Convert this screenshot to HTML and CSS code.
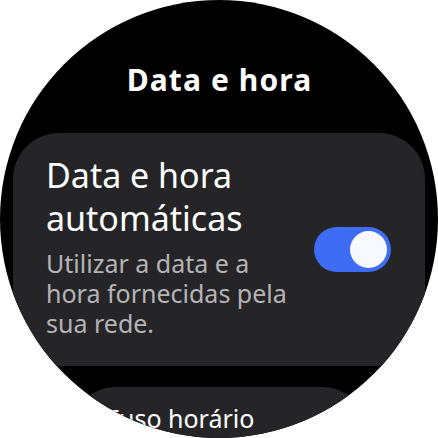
FILE: index.html
```html
<!DOCTYPE html>
<html lang="pt">
<head>
<meta charset="utf-8">
<title>Data e hora</title>
<link rel="stylesheet" href="styles.css">
</head>
<body>
<div class="screen">
  <h1 class="heading">Data e hora</h1>
  <div class="card card-main">
    <div class="card-text">
      <div class="card-title">Data e hora automáticas</div>
      <div class="card-sub">Utilizar a data e a hora fornecidas pela sua rede.</div>
    </div>
    <div class="toggle"><div class="knob"></div></div>
  </div>
  <div class="card card-next">
    <div class="card-title small">Fuso horário</div>
  </div>
</div>
</body>
</html>
```
FILE: styles.css
```css
html, body {
  margin: 0;
  padding: 0;
  background: #ffffff;
}
body {
  font-family: "Noto Sans", "Open Sans", sans-serif;
}
.screen {
  width: 438px;
  height: 438px;
  border-radius: 50%;
  background: #000000;
  overflow: hidden;
  display: flex;
  flex-direction: column;
  align-items: center;
}
.heading {
  margin: 62px 0 0 0;
  padding-left: 1px;
  font-size: 30px;
  line-height: 35px;
  font-weight: 700;
  letter-spacing: 1.1px;
  color: #ffffff;
  text-align: center;
}
.card {
  flex: none;
  background: #252527;
  box-sizing: border-box;
}
.card-main {
  margin-top: 36px;
  width: 412px;
  height: 233px;
  border-radius: 46px;
  padding: 21px 34px 0 33px;
  display: flex;
  align-items: flex-start;
  justify-content: space-between;
}
.card-text {
  width: 258px;
}
.card-title {
  font-size: 34px;
  line-height: 43px;
  color: #ffffff;
  font-weight: 400;
}
.card-sub {
  margin-top: 8px;
  font-size: 25px;
  line-height: 30px;
  color: #b4b4b6;
}
.toggle {
  flex: none;
  align-self: center;
  margin-top: -21px;
  width: 77px;
  height: 45px;
  border-radius: 23px;
  background: #3f6cf5;
  box-sizing: border-box;
  padding: 4px;
  display: flex;
  justify-content: flex-end;
}
.knob {
  width: 37px;
  height: 37px;
  border-radius: 50%;
  background: #f8f9ff;
}
.card-next {
  margin-top: 21px;
  width: 292px;
  height: 100px;
  border-radius: 42px;
  padding: 16px 20px 0 33px;
}
.card-title.small {
  font-size: 25px;
  line-height: 30px;
}
```
